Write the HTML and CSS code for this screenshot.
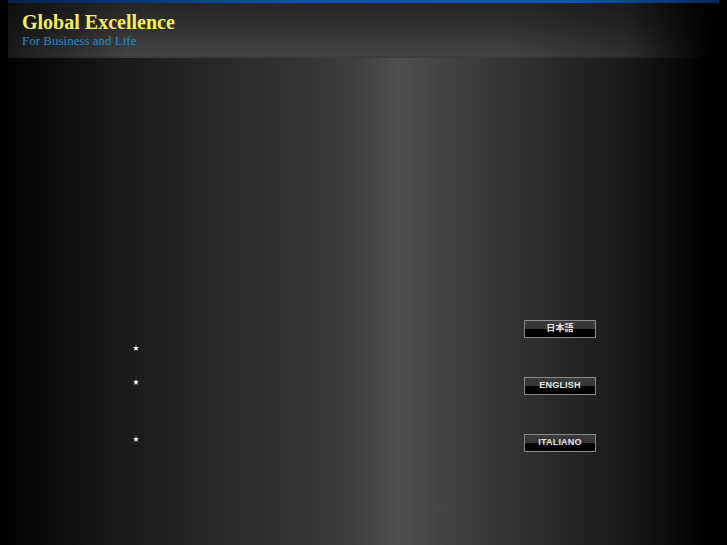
FILE: index.html
```html
<!DOCTYPE html>
<html lang="en">
<head>
<meta charset="utf-8">
<title>Global Excellence</title>
<link rel="stylesheet" href="styles.css">
</head>
<body>
<div class="page">
  <header class="header">
    <h1 class="title">Global Excellence</h1>
    <p class="subtitle">For Business and Life</p>
  </header>
  <main class="main">
    <ul class="stars">
      <li class="star s1"><svg viewBox="0 0 10 10" width="6" height="6"><polygon points="5,0 6.2,3.6 10,3.8 7,6.1 8.1,10 5,7.7 1.9,10 3,6.1 0,3.8 3.8,3.6" fill="#fff"/></svg></li>
      <li class="star s2"><svg viewBox="0 0 10 10" width="6" height="6"><polygon points="5,0 6.2,3.6 10,3.8 7,6.1 8.1,10 5,7.7 1.9,10 3,6.1 0,3.8 3.8,3.6" fill="#fff"/></svg></li>
      <li class="star s3"><svg viewBox="0 0 10 10" width="6" height="6"><polygon points="5,0 6.2,3.6 10,3.8 7,6.1 8.1,10 5,7.7 1.9,10 3,6.1 0,3.8 3.8,3.6" fill="#fff"/></svg></li>
    </ul>
    <nav class="langs">
      <a class="lang" href="#">日本語</a>
      <a class="lang" href="#">ENGLISH</a>
      <a class="lang" href="#">ITALIANO</a>
    </nav>
  </main>
</div>
</body>
</html>
```
FILE: styles.css
```css
html, body {
  margin: 0;
  padding: 0;
}
body {
  background: #000;
  width: 727px;
  height: 545px;
  overflow: hidden;
}
.page {
  height: 545px;
  background: linear-gradient(to right,
    #000 0px, #040404 20px, #161616 100px, #232323 180px, #303030 280px,
    #3d3d3d 350px, #505050 398px, #444 440px, #383838 490px,
    #2a2a2a 550px, #1a1a1a 620px, #090909 680px, #000 705px, #000 727px);
}
.header {
  margin: 0 8px;
  border-top: 3px solid #0d4fa8;
  border-image: linear-gradient(to right, #06214a, #0d52b0 40%, #0d56b8 80%, #06264f) 1;
  background:
    linear-gradient(to right, rgba(0,0,0,0.6) 0px, rgba(0,0,0,0) 120px, rgba(0,0,0,0) 500px, rgba(0,0,0,0.3) 620px, rgba(0,0,0,0.9) 690px, #000 705px),
    linear-gradient(to bottom, #262626 0px, #2e2e2e 20px, #3a3a3a 38px, #434343 52px, #3a3a3a 55px);
  padding: 8px 0 0 14px;
  box-sizing: border-box;
  height: 58px;
}
.title {
  margin: 0;
  font-family: "Liberation Serif", "DejaVu Serif", serif;
  font-weight: bold;
  font-size: 20px;
  line-height: 22px;
  color: #f2f060;
}
.subtitle {
  margin: 0;
  font-family: "Liberation Serif", "DejaVu Serif", serif;
  font-size: 13px;
  line-height: 15px;
  color: #1f8ccc;
}
.main {
  display: flex;
  height: 487px;
}
.stars {
  list-style: none;
  margin: 0;
  padding: 287px 0 0 133px;
  width: 6px;
  display: flex;
  flex-direction: column;
}
.star {
  height: 6px;
  line-height: 0;
}
.star svg {
  display: block;
}
.s2 { margin-top: 28px; }
.s3 { margin-top: 51px; }
.langs {
  margin-left: 385px;
  padding-top: 262px;
  display: flex;
  flex-direction: column;
  gap: 39px;
}
.lang {
  display: block;
  width: 70px;
  height: 16px;
  border: 1px solid #8a8a8a;
  background: linear-gradient(to bottom, #3c3c3c 0, #353535 8px, #000 8px, #000 16px);
  color: #e6e6e6;
  text-decoration: none;
  text-align: center;
  font-family: "Liberation Sans", Arial, "Noto Sans CJK JP", sans-serif;
  font-weight: bold;
  font-size: 9px;
  line-height: 15px;
  letter-spacing: 0.2px;
}
```
